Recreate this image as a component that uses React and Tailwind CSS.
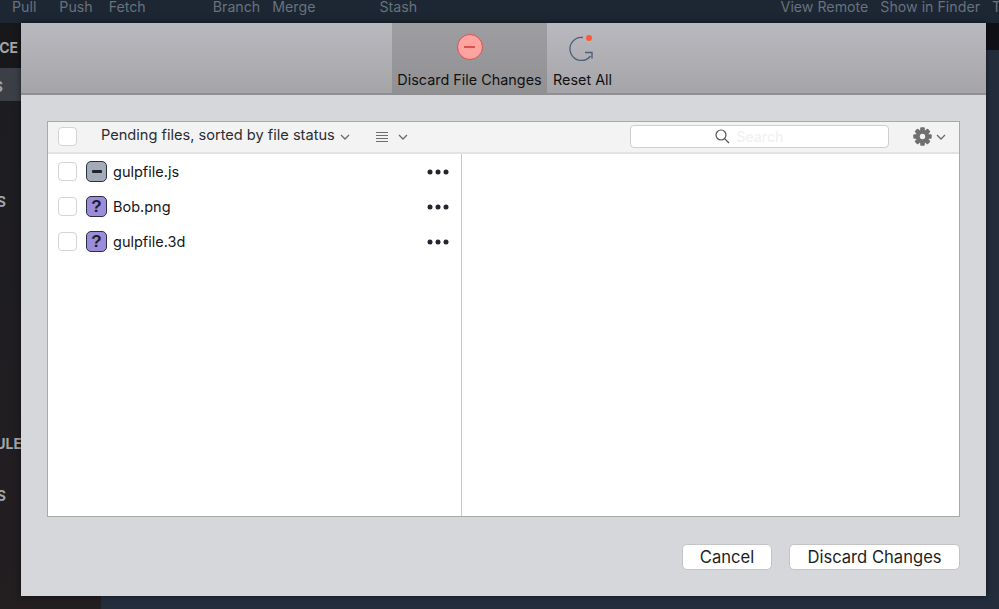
import React from "react";

function Check({ className = "" }) {
  return <div className={"w-[19px] h-[19px] rounded-[4px] bg-white border border-[#d4d4d4] shrink-0 " + className} />;
}

function Chevron({ className = "", color = "#6b6b6b" }) {
  return (
    <svg width="10" height="6" viewBox="0 0 10 6" className={className}>
      <path d="M1 1l4 4 4-4" fill="none" stroke={color} strokeWidth="1.3" />
    </svg>
  );
}

function Status({ kind }) {
  if (kind === "minus") {
    return (
      <div className="w-[21px] h-[21px] rounded-[5px] bg-[#a4abb8] border-[1.5px] border-[#2a3140] flex items-center justify-center shrink-0">
        <div className="w-[10px] h-[2.5px] bg-[#20242e] rounded-[1px]" />
      </div>
    );
  }
  return (
    <div className="w-[21px] h-[21px] rounded-[5px] bg-[#9b8ddb] border-[1.5px] border-[#2a2f45] flex items-center justify-center shrink-0 text-[17px] leading-none font-bold text-[#1c1c2c] font-['Liberation_Sans',sans-serif]">
      ?
    </div>
  );
}

function Row({ kind, name }) {
  return (
    <div className="h-[35px] flex items-center pl-[10px] pr-[12px]">
      <Check />
      <div className="ml-[9px]"><Status kind={kind} /></div>
      <span className="ml-[6px] text-[14.5px] text-[#16181c]">{name}</span>
      <svg width="22" height="6" viewBox="0 0 22 6" className="ml-auto">
        <circle cx="3" cy="3" r="2.5" fill="#23262e" />
        <circle cx="11" cy="3" r="2.5" fill="#23262e" />
        <circle cx="19" cy="3" r="2.5" fill="#23262e" />
      </svg>
    </div>
  );
}

function Gear() {
  return (
    <svg width="19" height="19" viewBox="0 0 19 19">
      <g fill="#6f6f6f">
        {[0, 45, 90, 135].map((a) => (
          <rect key={a} x="7.2" y="0.3" width="4.6" height="18.4" rx="1" transform={`rotate(${a} 9.5 9.5)`} />
        ))}
        <circle cx="9.5" cy="9.5" r="6.6" />
      </g>
      <circle cx="9.5" cy="9.5" r="2.7" fill="#f3f3f3" />
    </svg>
  );
}

export default function App() {
  return (
    <div className="relative w-[999px] h-[609px] overflow-hidden bg-[#232d3c] font-['Inter',sans-serif]">
      {/* app toolbar behind */}
      <div className="h-[23px] bg-[#1c2733] flex items-start text-[14.2px] leading-[14px] text-[#68717d]">
        <span className="ml-[12px]">Pull</span>
        <span className="ml-[23px]">Push</span>
        <span className="ml-[16px]">Fetch</span>
        <span className="ml-[67px]">Branch</span>
        <span className="ml-[12px]">Merge</span>
        <span className="ml-[64px]">Stash</span>
        <span className="ml-auto">View Remote</span>
        <span className="ml-[12px]">Show in Finder</span>
        <span className="ml-[12px] w-[7px] overflow-hidden">T</span>
      </div>

      {/* app body behind */}
      <div className="flex h-[586px]">
        <div className="w-[101px] bg-gradient-to-b from-[#1b1c22] to-[#231e20] flex flex-col font-bold text-[14px] text-[#a3a5aa]">
          <div className="h-[45px] bg-[#18181b] pt-[17px] leading-[16px] flex justify-end pr-[83px]">CE</div>
          <div className="h-[33px] bg-[#3c3f46] pt-[11px] leading-[16px] flex justify-end pr-[98px] overflow-hidden">S</div>
          <div className="h-[93px]" />
          <div className="h-[20px] leading-[16px] flex justify-end pr-[95px]">S</div>
          <div className="h-[222px]" />
          <div className="h-[20px] leading-[16px] flex justify-end pr-[79px]">ULE</div>
          <div className="h-[32px]" />
          <div className="h-[20px] leading-[16px] flex justify-end pr-[95px]">S</div>
        </div>
        <div className="flex-1 flex flex-col">
          <div className="h-[27px] bg-[#0f1116]" />
          <div className="flex-1 bg-[#232d3c]" />
        </div>
      </div>

      {/* dialog */}
      <div className="absolute left-[21px] top-[23px] w-[965px] h-[573px] bg-[#d6d7da] flex flex-col shadow-[0_0_6px_rgba(0,0,0,0.5)]">
        <div className="h-[72px] shrink-0 border-b-2 border-[#8f8f93] bg-gradient-to-b from-[#b9b9bf] to-[#a5a5a9] flex justify-center">
          <div className="flex ml-[3px]">
            <div className="w-[155px] bg-gradient-to-b from-[#9e9ea2] to-[#919194] flex flex-col items-center">
              <div className="mt-[11px] w-[26px] h-[26px] rounded-full bg-[#ffa3a1] border-[1.5px] border-[#d9534e] flex items-center justify-center">
                <div className="w-[11px] h-[1.5px] bg-[#d9534e]" />
              </div>
              <span className="mt-[11px] text-[14.4px] leading-[17px] text-[#111] whitespace-nowrap">Discard File Changes</span>
            </div>
            <div className="w-[71px] flex flex-col items-center">
              <svg width="30" height="30" viewBox="0 0 30 30" className="mt-[9px] ml-[-4px]">
                <path d="M17 4.5A11.5 11.5 0 1 0 24.5 23" fill="none" stroke="#4f5f7a" strokeWidth="1.3" transform="translate(0 1)" />
                <path d="M19 20.5h7v6" fill="none" stroke="#4f5f7a" strokeWidth="1.4" />
                <circle cx="23" cy="6" r="3" fill="#ff5a2e" />
              </svg>
              <span className="mt-[9px] text-[14.4px] leading-[17px] text-[#111] whitespace-nowrap">Reset All</span>
            </div>
          </div>
        </div>

        <div className="flex-1 px-[26px] pt-[26px] pb-[26px] flex flex-col">
          <div className="h-[396px] border border-[#a9a9a9] bg-white flex flex-col">
            <div className="h-[32px] shrink-0 bg-[#f3f3f3] border-b-2 border-[#e2e2e2] flex items-center pl-[10px]">
              <Check className="mt-[-1px]" />
              <span className="ml-[24px] mt-[-3px] text-[14.6px] text-[#2b2d33] whitespace-nowrap">Pending files, sorted by file status</span>
              <Chevron className="ml-[5px] mt-[-1px]" />
              <svg width="12" height="13" viewBox="0 0 12 13" className="ml-[26px]">
                <path d="M0 1.5h12M0 4.5h12M0 7.5h12M0 10.5h12" stroke="#6f6f6f" strokeWidth="1" />
              </svg>
              <Chevron className="ml-[10px]" />
              <div className="ml-auto mt-[-1px] w-[259px] h-[23px] bg-white rounded-[4px] border border-[#cfcfcf] flex items-center justify-center pr-[20px]">
                <svg width="15" height="15" viewBox="0 0 15 15">
                  <circle cx="6" cy="6" r="5" fill="none" stroke="#555" strokeWidth="1.2" />
                  <path d="M9.6 9.6l4.4 4.4" stroke="#555" strokeWidth="1.3" />
                </svg>
                <span className="ml-[6px] text-[14px] font-medium text-[#f1f1f1]">Search</span>
              </div>
              <div className="ml-[24px] mr-[13px] mt-[-1px] flex items-center">
                <Gear />
                <Chevron className="ml-[4px]" />
              </div>
            </div>
            <div className="flex-1 flex">
              <div className="w-[414px] border-r border-[#c9c9c9]">
                <Row kind="minus" name="gulpfile.js" />
                <Row kind="q" name="Bob.png" />
                <Row kind="q" name="gulpfile.3d" />
              </div>
              <div className="flex-1" />
            </div>
          </div>
          <div className="flex justify-end gap-[17px] mt-[27px]">
            <button className="w-[90px] h-[26px] pt-[1px] bg-white rounded-[5px] border border-[#c4c4c6] text-[16.6px] leading-none text-[#1d1f24]">Cancel</button>
            <button className="w-[171px] h-[26px] pt-[1px] bg-white rounded-[5px] border border-[#c4c4c6] text-[16.6px] leading-none text-[#1d1f24]">Discard Changes</button>
          </div>
        </div>
      </div>
    </div>
  );
}
